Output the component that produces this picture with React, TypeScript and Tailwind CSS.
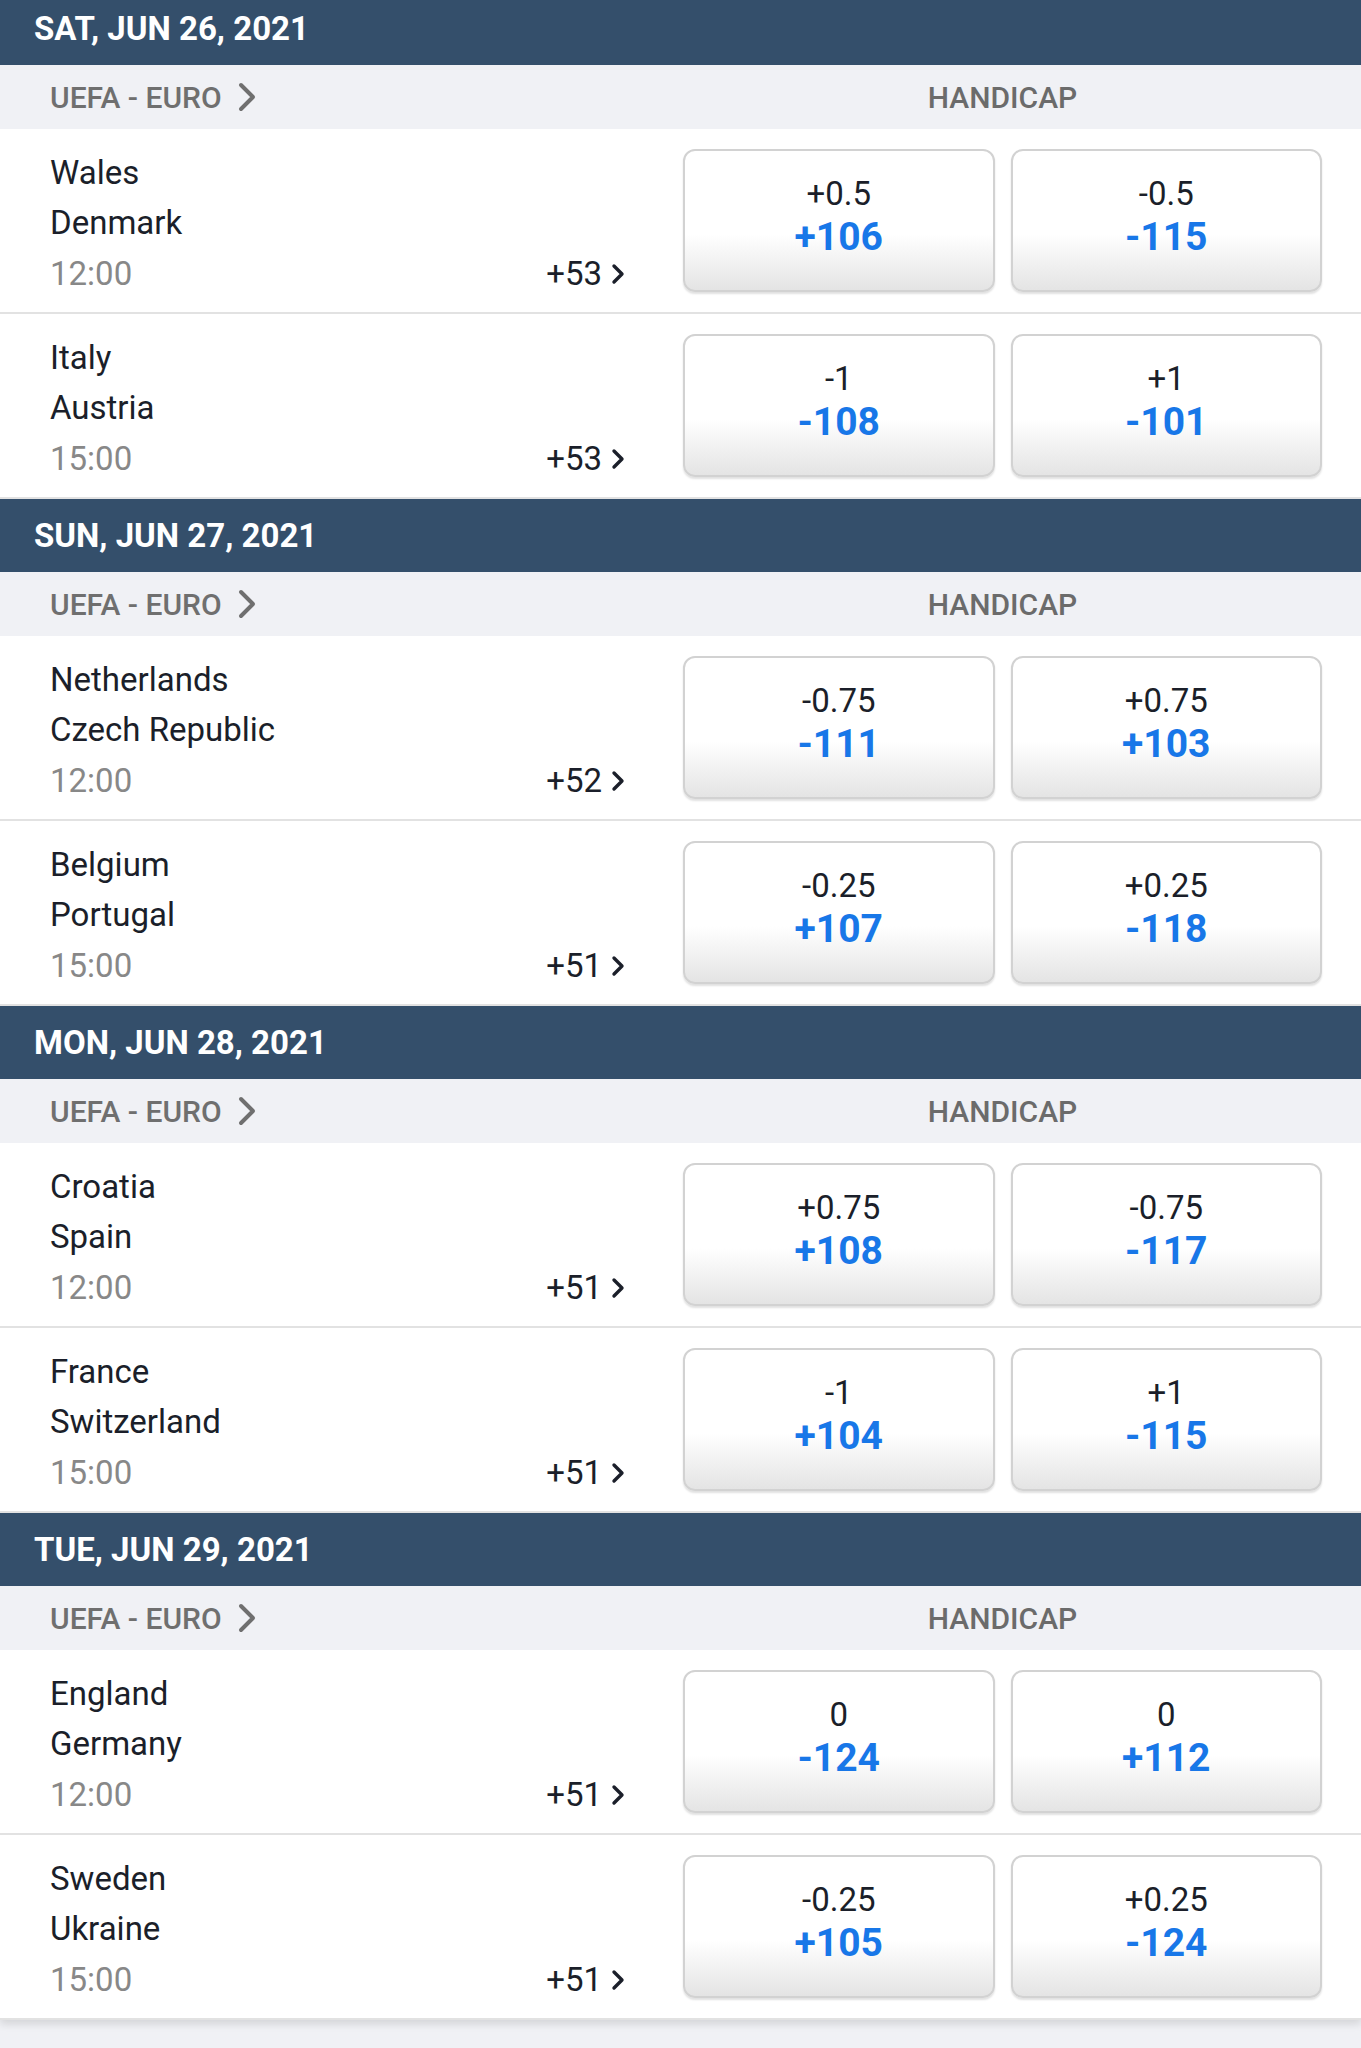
import React from 'react';

// ============================================
// Data
// ============================================

interface Match {
  home: string;
  away: string;
  time: string;
  more: string;
  lines: [Outcome, Outcome];
}

interface Outcome {
  handicap: string;
  odds: string;
}

interface Day {
  date: string;
  league: string;
  matches: Match[];
}

const days: Day[] = [
  {
    date: 'SAT, JUN 26, 2021',
    league: 'UEFA - EURO',
    matches: [
      { home: 'Wales', away: 'Denmark', time: '12:00', more: '+53', lines: [{ handicap: '+0.5', odds: '+106' }, { handicap: '-0.5', odds: '-115' }] },
      { home: 'Italy', away: 'Austria', time: '15:00', more: '+53', lines: [{ handicap: '-1', odds: '-108' }, { handicap: '+1', odds: '-101' }] },
    ],
  },
  {
    date: 'SUN, JUN 27, 2021',
    league: 'UEFA - EURO',
    matches: [
      { home: 'Netherlands', away: 'Czech Republic', time: '12:00', more: '+52', lines: [{ handicap: '-0.75', odds: '-111' }, { handicap: '+0.75', odds: '+103' }] },
      { home: 'Belgium', away: 'Portugal', time: '15:00', more: '+51', lines: [{ handicap: '-0.25', odds: '+107' }, { handicap: '+0.25', odds: '-118' }] },
    ],
  },
  {
    date: 'MON, JUN 28, 2021',
    league: 'UEFA - EURO',
    matches: [
      { home: 'Croatia', away: 'Spain', time: '12:00', more: '+51', lines: [{ handicap: '+0.75', odds: '+108' }, { handicap: '-0.75', odds: '-117' }] },
      { home: 'France', away: 'Switzerland', time: '15:00', more: '+51', lines: [{ handicap: '-1', odds: '+104' }, { handicap: '+1', odds: '-115' }] },
    ],
  },
  {
    date: 'TUE, JUN 29, 2021',
    league: 'UEFA - EURO',
    matches: [
      { home: 'England', away: 'Germany', time: '12:00', more: '+51', lines: [{ handicap: '0', odds: '-124' }, { handicap: '0', odds: '+112' }] },
      { home: 'Sweden', away: 'Ukraine', time: '15:00', more: '+51', lines: [{ handicap: '-0.25', odds: '+105' }, { handicap: '+0.25', odds: '-124' }] },
    ],
  },
];

// ============================================
// Icons
// ============================================

function ChevronSmall() {
  return (
    <svg width="16" height="24" viewBox="0 0 16 24" className="ml-[8px]">
      <polyline points="4,4 12,12 4,20" fill="none" stroke="#1b1f2a" strokeWidth="3.4" strokeLinecap="round" strokeLinejoin="round" />
    </svg>
  );
}

function ChevronLeague() {
  return (
    <svg width="22" height="32" viewBox="0 0 22 32" className="ml-[14px]">
      <polyline points="5,4 17,16 5,28" fill="none" stroke="#6f6f6f" strokeWidth="4" strokeLinecap="round" strokeLinejoin="round" />
    </svg>
  );
}

// ============================================
// Components
// ============================================

function OddsButton({ outcome }: { outcome: Outcome }) {
  return (
    <button className="h-[143px] rounded-[12px] border-2 border-[#d2d2d2] bg-linear-to-b from-white from-60% to-[#e4e4e4] shadow-[0_2px_2px_rgba(0,0,0,0.12)] flex flex-col items-center pt-[23px]">
      <span className="text-[33px] leading-[40px] text-[#1b1f2a]">{outcome.handicap}</span>
      <span className="text-[39px] leading-[46px] font-bold text-[#1877e8]">{outcome.odds}</span>
    </button>
  );
}

function MatchRow({ match }: { match: Match }) {
  return (
    <div className="h-[185px] bg-white border-b-2 border-[#e2e2e2] flex items-center pl-[50px] pr-[39px]">
      <div className="flex-1 self-stretch pt-[19px] mr-[57px] text-[33px] leading-[50px]">
        <div className="text-[#1b1f2a]">{match.home}</div>
        <div className="text-[#1b1f2a]">{match.away}</div>
        <div className="flex items-center justify-between leading-[52px]">
          <span className="text-[#888888]">{match.time}</span>
          <span className="flex items-center text-[#1b1f2a]">
            {match.more}
            <ChevronSmall />
          </span>
        </div>
      </div>
      <div className="w-[639px] grid grid-cols-2 gap-[16px]">
        <OddsButton outcome={match.lines[0]} />
        <OddsButton outcome={match.lines[1]} />
      </div>
    </div>
  );
}

function DaySection({ day }: { day: Day }) {
  return (
    <div>
      <div className="h-[73px] bg-[#344f6b] px-[34px] flex items-center text-white text-[33px] font-bold">
        {day.date}
      </div>
      <div className="h-[64px] bg-[#f0f1f5] flex items-center pl-[50px] pr-[39px]">
        <div className="flex-1 flex items-center text-[30px] font-medium text-[#6f6f6f]">
          {day.league}
          <ChevronLeague />
        </div>
        <div className="w-[639px] text-center text-[30px] font-medium text-[#6b6b6b]">HANDICAP</div>
      </div>
      {day.matches.map((m) => (
        <MatchRow key={m.home} match={m} />
      ))}
    </div>
  );
}

export default function App() {
  return (
    <div className="min-h-screen bg-[#f0f1f5] font-['Roboto',sans-serif] overflow-hidden">
      <div className="-mt-2 shadow-[0_4px_8px_rgba(0,0,0,0.12)]">
        {days.map((d) => (
          <DaySection key={d.date} day={d} />
        ))}
      </div>
    </div>
  );
}
